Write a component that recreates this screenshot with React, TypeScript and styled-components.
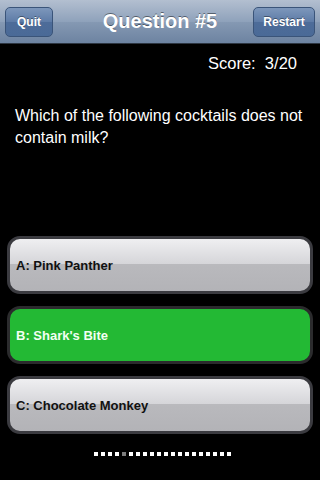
import React from "react";
import styled, { createGlobalStyle } from "styled-components";

const Global = createGlobalStyle`
  html, body { margin: 0; padding: 0; background: #000; }
  body { font-family: "Liberation Sans", Arial, sans-serif; }
`;

const Screen = styled.div`
  width: 320px;
  height: 480px;
  background: #000;
  display: flex;
  flex-direction: column;
  overflow: hidden;
`;

const NavBar = styled.div`
  height: 43px;
  border-bottom: 1px solid #2d3642;
  background: linear-gradient(#b3bfd0 0%, #8fa2bb 50%, #8599b3 51%, #6d83a1 100%);
  display: grid;
  grid-template-columns: 1fr auto 1fr;
  align-items: center;
  padding: 0 5px;
`;

const NavButton = styled.button<{ $align: "start" | "end" }>`
  justify-self: ${(p) => p.$align};
  height: 30px;
  width: ${(p) => (p.$align === "start" ? "48px" : "62px")};
  border-radius: 5px;
  border: 1px solid #3a5479;
  background: linear-gradient(#7d97bb 0%, #5d7ba6 50%, #4d6c99 51%, #4a6a97 100%);
  color: #fff;
  font-family: "Liberation Sans", Arial, sans-serif;
  font-weight: bold;
  font-size: 12px;
  text-shadow: 0 -1px 0 rgba(0, 0, 0, 0.4);
  padding: 0;
`;

const Title = styled.div`
  color: #fff;
  font-weight: bold;
  font-size: 20px;
  text-shadow: 0 -1px 0 rgba(0, 0, 0, 0.45);
`;

const Score = styled.div`
  margin-top: 9px;
  line-height: 20px;
  font-size: 16.5px;
  color: #fff;
  text-align: right;
  padding-right: 23px;
  white-space: pre;
`;

const Question = styled.div`
  margin-top: 32px;
  padding: 0 15px;
  font-size: 16px;
  line-height: 22px;
  color: #fff;
`;

const Answers = styled.div`
  margin-top: 87px;
  padding: 0 7px;
  display: flex;
  flex-direction: column;
  gap: 12px;
`;

const Answer = styled.div<{ $correct?: boolean }>`
  height: 52px;
  border: 3px solid ${(p) => (p.$correct ? "#2b2b2d" : "#3b3b40")};
  border-radius: 13px;
  display: flex;
  align-items: center;
  padding-left: 6px;
  font-weight: bold;
  font-size: 13px;
  color: ${(p) => (p.$correct ? "#f2fff2" : "#111")};
  background: ${(p) =>
    p.$correct
      ? "#23b934"
      : "linear-gradient(#efeff1 0%, #d5d5d9 48%, #b9b9bd 49%, #b3b3b7 100%)"};
`;

const Dots = styled.div`
  margin-top: 18px;
  display: flex;
  justify-content: center;
  gap: 3px;
  padding-left: 4px;
`;

const Dot = styled.div<{ $current?: boolean }>`
  width: 4px;
  height: 4px;
  background: ${(p) => (p.$current ? "#7c7c7c" : "#fff")};
`;

export default function App() {
  const answers = [
    { label: "A: Pink Panther" },
    { label: "B: Shark's Bite", correct: true },
    { label: "C: Chocolate Monkey" },
  ];
  return (
    <Screen>
      <Global />
      <NavBar>
        <NavButton $align="start">Quit</NavButton>
        <Title>Question #5</Title>
        <NavButton $align="end">Restart</NavButton>
      </NavBar>
      <Score>{"Score:  3/20"}</Score>
      <Question>Which of the following cocktails does not contain milk?</Question>
      <Answers>
        {answers.map((a) => (
          <Answer key={a.label} $correct={a.correct}>
            {a.label}
          </Answer>
        ))}
      </Answers>
      <Dots>
        {Array.from({ length: 20 }, (_, i) => (
          <Dot key={i} $current={i === 4} />
        ))}
      </Dots>
    </Screen>
  );
}
